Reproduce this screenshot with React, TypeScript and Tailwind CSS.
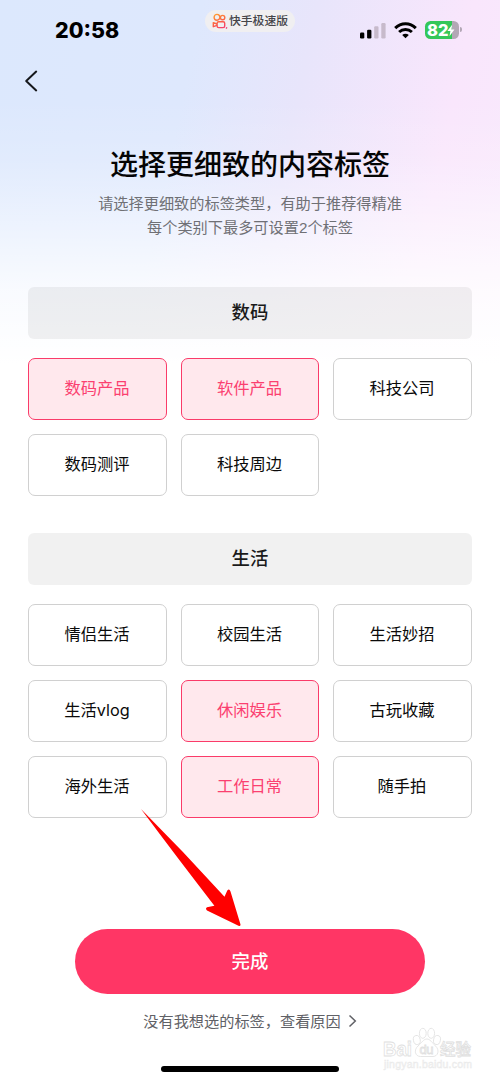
type Tag = { label: string; selected?: boolean };

const digital: Tag[] = [
  { label: "数码产品", selected: true },
  { label: "软件产品", selected: true },
  { label: "科技公司" },
  { label: "数码测评" },
  { label: "科技周边" },
];

const life: Tag[] = [
  { label: "情侣生活" },
  { label: "校园生活" },
  { label: "生活妙招" },
  { label: "生活vlog" },
  { label: "休闲娱乐", selected: true },
  { label: "古玩收藏" },
  { label: "海外生活" },
  { label: "工作日常", selected: true },
  { label: "随手拍" },
];

function TagGroup({ title, tags }: { title: string; tags: Tag[] }) {
  return (
    <section>
      <h2 className="flex h-[52px] items-center justify-center rounded-[6px] bg-black/[0.055] pb-[1px] text-[18.4px] font-medium text-[#1a1a1a]">
        {title}
      </h2>
      <div className="mt-[19px] grid grid-cols-3 gap-[14px]">
        {tags.map((tag) => (
          <button
            key={tag.label}
            className={
              "flex h-[62px] items-center justify-center rounded-[7px] border pr-[1px] pb-[2px] text-[16.3px] " +
              (tag.selected
                ? "border-[#fa3b69] bg-[#ffe8ed] text-[#fb4070]"
                : "border-[#d0d0d0] bg-white text-[#0a0a0a]")
            }
          >
            {tag.label}
          </button>
        ))}
      </div>
    </section>
  );
}

function StatusBar() {
  return (
    <div className="flex h-[61px] items-start pr-[38px] pl-[55px]">
      <div className="mt-[18px] w-[150px] font-['Inter','Liberation_Sans',sans-serif] text-[21.4px] leading-[25px] font-extrabold text-black">
        20:58
      </div>
      <div className="mt-[10px] flex h-[22px] w-[90px] items-center rounded-full bg-[#f0eff1] pl-[7px]">
        <svg width="16" height="17" viewBox="0 0 16 17" fill="none" stroke="url(#logo)" strokeWidth="1.4">
          <defs>
            <linearGradient id="logo" x1="4" y1="0" x2="12" y2="16" gradientUnits="userSpaceOnUse">
              <stop stopColor="#ff9f2e" />
              <stop offset="0.6" stopColor="#fb5a4b" />
              <stop offset="1" stopColor="#f43a78" />
            </linearGradient>
          </defs>
          <circle cx="5" cy="4.3" r="2.9" />
          <circle cx="10.6" cy="4.6" r="2.2" />
          <rect x="5.1" y="8.7" width="7.6" height="5.9" rx="1.6" />
          <path d="M5 11 L1.3 9.6 V13.7 L5 12.4" strokeLinejoin="round" />
          <path d="M14.8 14.2 L14.2 15.6" />
        </svg>
        <span className="ml-[1px] text-[11.8px] leading-[20px] font-medium whitespace-nowrap text-[#454549]">
          快手极速版
        </span>
      </div>
      <div className="mt-[20px] ml-auto flex items-center">
        <svg width="26" height="18" viewBox="0 0 26 18">
          <rect x="0" y="11.5" width="4.3" height="6" rx="1.2" fill="#000" />
          <rect x="7.1" y="8.7" width="4.3" height="8.8" rx="1.2" fill="#000" />
          <rect x="14.2" y="5.2" width="4.3" height="12.3" rx="1.2" fill="#c7bacb" />
          <rect x="21.3" y="2" width="4.3" height="15.5" rx="1.2" fill="#c7bacb" />
        </svg>
        <svg className="ml-[8px]" width="23" height="18" viewBox="0 0 23 18" fill="none" stroke="#000" strokeWidth="3">
          <path d="M1.2 7.1 C7 1.4 16 1.4 21.8 7.1" />
          <path d="M5.1 11 C8.8 7.6 14.2 7.6 17.9 11" />
          <path d="M11.5 17.2 L8.2 13.9 C10.1 12.3 12.9 12.3 14.8 13.9 Z" fill="#000" stroke="none" />
        </svg>
        <div className="mt-[1px] ml-[8px] flex h-[18px] w-[34px] items-center rounded-[5.5px] bg-[linear-gradient(90deg,#34c759_0_27px,#b3a7b5_27px)] font-['Inter','Liberation_Sans',sans-serif]">
          <span className="pl-[2px] text-[16.5px] leading-[18px] font-extrabold text-white">82</span>
          <svg width="8" height="13" viewBox="0 0 9 13" className="-ml-[1px] shrink-0">
            <path d="M5.8 0 L0.4 7 H3.8 L2.8 13 L8.4 5.4 H5 Z" fill="#fff" />
          </svg>
        </div>
        <div className="ml-[1px] h-[5px] w-[2px] rounded-r-full bg-[#b3a7b5]" />
      </div>
    </div>
  );
}

function Watermark() {
  return (
    <svg
      className="absolute top-[1025px] left-[380px]"
      width="96"
      height="48"
      viewBox="0 0 96 48"
      fill="#fff"
      stroke="#e0e0e0"
      strokeWidth="0.8"
      fontFamily="Liberation Sans, Noto Sans CJK SC, sans-serif"
    >
      <ellipse cx="36.8" cy="15" rx="3.4" ry="4.6" transform="rotate(-12 36.8 15)" />
      <ellipse cx="42.8" cy="8.3" rx="3.4" ry="5" />
      <ellipse cx="51.2" cy="8.3" rx="3.4" ry="5" />
      <ellipse cx="57" cy="15" rx="3.4" ry="4.6" transform="rotate(12 57 15)" />
      <path d="M47 14 C50 14 52 17.5 55.5 21 C60 25 58 31.5 53 31.5 H40.5 C35 31.5 33.5 25 38 21 C42 17.5 43.5 14 47 14 Z" />
      <text x="3" y="31" fontSize="20.5" fontWeight="700" textLength="29" lengthAdjust="spacingAndGlyphs">Bai</text>
      <text x="39.5" y="29" fontSize="13" textLength="14">du</text>
      <text x="60" y="30" fontSize="15.5" fontWeight="500" textLength="31">经验</text>
      <text x="4" y="43" fontSize="10.5" textLength="88" fill="#f4f4f4" stroke="#e9e9e9" strokeWidth="0.4">
        jingyan.baidu.com
      </text>
    </svg>
  );
}

export default function App() {
  return (
    <div className="relative h-[1082px] w-[500px] overflow-hidden bg-white bg-[linear-gradient(180deg,transparent_0,transparent_100px,#ffffff26_160px,#ffffff80_230px,#ffffffd0_290px,#ffffff_365px),linear-gradient(102deg,#dce8fd_0%,#dee8fd_35%,#e8e5fb_55%,#f9e6fc_82%,#f8e9fc_100%)] bg-[length:500px_370px] bg-no-repeat font-['Inter','Noto_Sans_CJK_SC',sans-serif]">
      <StatusBar />
      <header className="flex h-[40px] items-center pl-[24px]">
        <svg width="14" height="22" viewBox="0 0 14 22" fill="none" stroke="#16181c" strokeWidth="2" strokeLinecap="round" strokeLinejoin="round">
          <path d="M12.2 1.6 L2.2 11 L12.2 20.4" />
        </svg>
      </header>
      <div className="mt-[42px] h-[97px] text-center font-['Noto_Sans_CJK_SC',sans-serif]">
        <h1 className="text-[28px] leading-[40px] font-medium text-[#050505]">选择更细致的内容标签</h1>
        <p className="mt-[6.5px] text-[15.2px] leading-[24.7px] text-[#6f7075]">
          请选择更细致的标签类型，有助于推荐得精准
          <br />
          每个类别下最多可设置<span className="font-['Liberation_Sans',sans-serif]">2</span>个标签
        </p>
      </div>
      <main className="mt-[47px] flex flex-col gap-[37px] px-[28.3px]">
        <TagGroup title="数码" tags={digital} />
        <TagGroup title="生活" tags={life} />
      </main>
      <footer className="mt-[111px] flex flex-col items-center">
        <button className="flex h-[65px] w-[350px] items-center justify-center rounded-full bg-[#ff3665] text-[18.4px] font-medium text-white">
          完成
        </button>
        <div className="mt-[14px] flex h-[24px] items-center font-['Noto_Sans_CJK_SC',sans-serif] text-[15.2px] text-[#606166]">
          没有我想选的标签，查看原因
          <svg className="mt-[1px] ml-[7px]" width="9" height="14" viewBox="0 0 9 14" fill="none" stroke="#606166" strokeWidth="1.5">
            <path d="M1.5 1.5 L7.3 7 L1.5 12.5" />
          </svg>
        </div>
        <div className="mt-[34px] h-[6px] w-[178px] rounded-full bg-black" />
      </footer>
      <svg className="absolute top-[805px] left-[138px]" width="106" height="124" viewBox="138 805 106 124">
        <path
          d="M141 809 Q184 852 224.5 896.8 L227.3 890.5 Q229.3 888 230.5 891.5 L240.5 924.5 Q240.7 926.6 238.5 925.7 L207 910.5 Q205 908.7 207 907.3 L214.4 905.7 Q176 856 141 809 Z"
          fill="#ff0000"
        />
      </svg>
      <Watermark />
    </div>
  );
}
